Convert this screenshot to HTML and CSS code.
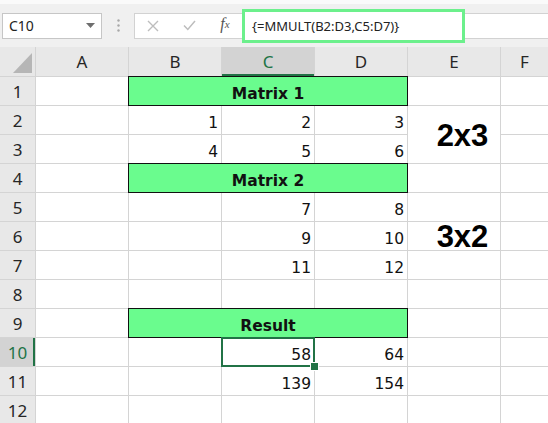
FILE: index.html
```html
<!DOCTYPE html>
<html lang="en">
<head>
    <meta charset="UTF-8">
    <title>MMULT</title>
    <link rel="stylesheet" href="styles.css">
</head>
<body>
    <div class="toolbar">
        <div class="name-box">
            <span>C10</span>
            <svg class="arrow" width="9" height="5" viewBox="0 0 9 5"><path d="M0 0 H9 L4.5 5 Z" fill="#6e6e6e"/></svg>
        </div>
        <div class="sep">
            <svg width="3" height="13" viewBox="0 0 3 13"><circle cx="1.5" cy="1.5" r="1.2" fill="#a8a8a8"/><circle cx="1.5" cy="6.5" r="1.2" fill="#a8a8a8"/><circle cx="1.5" cy="11.5" r="1.2" fill="#a8a8a8"/></svg>
        </div>
        <div class="fx-buttons">
            <span class="fx-slot">
                <svg width="12" height="12" viewBox="0 0 12 12"><path d="M1 1 L11 11 M11 1 L1 11" stroke="#bdbdbd" stroke-width="1.4"/></svg>
            </span>
            <span class="fx-slot">
                <svg width="13" height="11" viewBox="0 0 13 11"><path d="M1 5.5 L4.8 9.5 L12 1" stroke="#bdbdbd" stroke-width="1.5" fill="none"/></svg>
            </span>
            <span class="fx-slot fx-label">f<sub>x</sub></span>
        </div>
        <div class="formula">
            <div class="formula-hl">{=MMULT(B2:D3,C5:D7)}</div>
        </div>
    </div>

    <div class="sheet">
        <!-- header row -->
        <div class="h corner">
            <svg width="35" height="29" viewBox="0 0 35 29"><path d="M13 26 H32 V6 Z" fill="#b6b6b6"/></svg>
        </div>
        <div class="h">A</div>
        <div class="h">B</div>
        <div class="h h-sel-col">C</div>
        <div class="h">D</div>
        <div class="h">E</div>
        <div class="h">F</div>

        <!-- 1 -->
        <div class="h rh">1</div>
        <div class="c"></div>
        <div class="c g span3">Matrix 1</div>
        <div class="c"></div>
        <div class="c"></div>

        <!-- 2 -->
        <div class="h rh">2</div>
        <div class="c"></div>
        <div class="c n">1</div>
        <div class="c n">2</div>
        <div class="c n">3</div>
        <div class="c big rows2">2x3</div>
        <div class="c"></div>

        <!-- 3 -->
        <div class="h rh">3</div>
        <div class="c"></div>
        <div class="c n">4</div>
        <div class="c n">5</div>
        <div class="c n">6</div>
        <div class="c"></div>

        <!-- 4 -->
        <div class="h rh">4</div>
        <div class="c"></div>
        <div class="c g span3">Matrix 2</div>
        <div class="c"></div>
        <div class="c"></div>

        <!-- 5 -->
        <div class="h rh">5</div>
        <div class="c"></div>
        <div class="c"></div>
        <div class="c n">7</div>
        <div class="c n">8</div>
        <div class="c"></div>
        <div class="c"></div>

        <!-- 6 -->
        <div class="h rh">6</div>
        <div class="c"></div>
        <div class="c"></div>
        <div class="c n">9</div>
        <div class="c n">10</div>
        <div class="c big">3x2</div>
        <div class="c"></div>

        <!-- 7 -->
        <div class="h rh">7</div>
        <div class="c"></div>
        <div class="c"></div>
        <div class="c n">11</div>
        <div class="c n">12</div>
        <div class="c"></div>
        <div class="c"></div>

        <!-- 8 -->
        <div class="h rh">8</div>
        <div class="c"></div>
        <div class="c"></div>
        <div class="c"></div>
        <div class="c"></div>
        <div class="c"></div>
        <div class="c"></div>

        <!-- 9 -->
        <div class="h rh">9</div>
        <div class="c"></div>
        <div class="c g span3">Result</div>
        <div class="c"></div>
        <div class="c"></div>

        <!-- 10 -->
        <div class="h rh h-sel-row">10</div>
        <div class="c"></div>
        <div class="c"></div>
        <div class="c n selected">58</div>
        <div class="c n">64</div>
        <div class="c"></div>
        <div class="c"></div>

        <!-- 11 -->
        <div class="h rh">11</div>
        <div class="c"></div>
        <div class="c"></div>
        <div class="c n">139</div>
        <div class="c n">154</div>
        <div class="c"></div>
        <div class="c"></div>

        <!-- 12 -->
        <div class="h rh">12</div>
        <div class="c"></div>
        <div class="c"></div>
        <div class="c"></div>
        <div class="c"></div>
        <div class="c"></div>
        <div class="c"></div>
    </div>
</body>
</html>
```

FILE: styles.css
```css
* {
    box-sizing: border-box;
}
body {
    margin: 0;
    width: 548px;
    height: 423px;
    overflow: hidden;
    background-color: #fafafa;
    font-family: "Noto Sans", sans-serif;
}

/* formula bar */
.toolbar {
    height: 43px;
    margin-top: 4px;
    background-color: #f0f0f0;
    display: flex;
    align-items: center;
}
.name-box {
    margin-left: 2px;
    width: 100px;
    height: 26px;
    background-color: white;
    border: 1px solid #c6c6c6;
    display: flex;
    align-items: center;
    justify-content: space-between;
    padding: 0 6px 0 6px;
    font-size: 14px;
    color: #222;
}
.sep {
    width: 32px;
    display: flex;
    justify-content: center;
    padding-left: 1px;
}
.fx-buttons {
    width: 110px;
    height: 26px;
    background-color: white;
    border: 1px solid #d2d2d2;
    border-right: none;
    display: flex;
    align-items: center;
}
.fx-slot {
    width: 36px;
    display: flex;
    justify-content: center;
    align-items: center;
}
.fx-label {
    font-family: "Liberation Serif", serif;
    font-style: italic;
    font-size: 16px;
    color: #555;
    margin-top: -3px;
}
.fx-label sub {
    font-size: 11px;
    vertical-align: -1px;
}
.formula {
    flex: 1;
    height: 26px;
    background-color: white;
    border-top: 1px solid #d2d2d2;
    border-bottom: 1px solid #d2d2d2;
    display: flex;
    align-items: center;
}
.formula-hl {
    margin-left: -2px;
    width: 223px;
    height: 34px;
    background-color: white;
    border: 3px solid #6cf08c;
    display: flex;
    align-items: center;
    padding-left: 7px;
    font-size: 13px;
    color: #222;
}

/* grid */
.sheet {
    display: grid;
    grid-template-columns: 35px repeat(5, 92px) 1fr;
    grid-template-rows: 29px repeat(12, 28px);
    gap: 1px;
    background-color: #d4d4d4;
}
.h {
    background-color: #e8e8e8;
    display: flex;
    align-items: center;
    justify-content: center;
    font-size: 17px;
    color: #262626;
}
.corner {
    display: block;
}
.corner svg {
    display: block;
}
.h-sel-col {
    background-color: #d3d3d3;
    color: #217346;
    box-shadow: inset 0 -2px 0 #217346;
}
.h-sel-row {
    background-color: #d3d3d3;
    color: #217346;
    box-shadow: inset -2px 0 0 #217346;
}
.c {
    background-color: white;
    display: flex;
    align-items: flex-end;
    padding: 0 3px 2px 3px;
    font-family: "DejaVu Sans", sans-serif;
    font-size: 15.5px;
    color: #111;
}
.n {
    justify-content: flex-end;
}
.g {
    background-color: #6afc8e;
    justify-content: center;
    font-weight: bold;
    box-shadow: 0 0 0 1px #111;
}
.span3 {
    grid-column: span 3;
}
.rows2 {
    grid-row: span 2;
}
.big {
    align-items: center;
    justify-content: center;
    padding: 2px 0 0 17px;
    font-family: "Liberation Sans", sans-serif;
    font-weight: bold;
    font-size: 31px;
    color: #000;
}
.selected {
    position: relative;
    z-index: 2;
    box-shadow: 0 0 0 1px #217346, inset 0 0 0 1px #217346;
}
.selected::after {
    content: "";
    position: absolute;
    right: -5px;
    bottom: -5px;
    width: 7px;
    height: 7px;
    background-color: #217346;
    border: 1px solid white;
}
```
